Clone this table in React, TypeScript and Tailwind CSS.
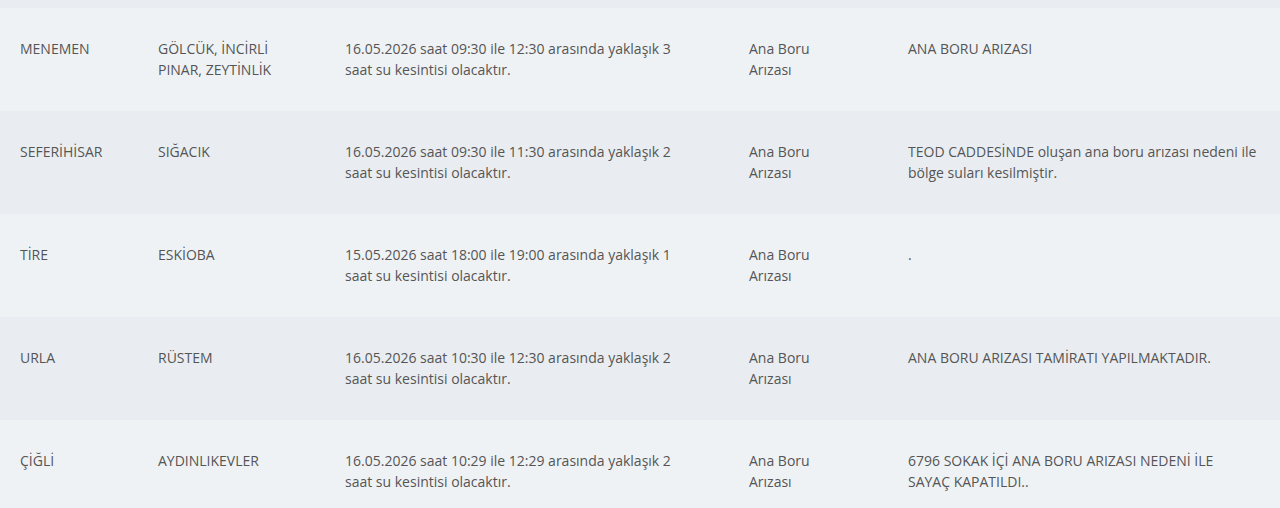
const rows = [
  {
    ilce: "MENEMEN",
    mahalle: "GÖLCÜK, İNCİRLİ PINAR, ZEYTİNLİK",
    aciklama: "16.05.2026 saat 09:30 ile 12:30 arasında yaklaşık 3 saat su kesintisi olacaktır.",
    tip: "Ana Boru Arızası",
    detay: "ANA BORU ARIZASI",
  },
  {
    ilce: "SEFERİHİSAR",
    mahalle: "SIĞACIK",
    aciklama: "16.05.2026 saat 09:30 ile 11:30 arasında yaklaşık 2 saat su kesintisi olacaktır.",
    tip: "Ana Boru Arızası",
    detay: "TEOD CADDESİNDE oluşan ana boru arızası nedeni ile bölge suları kesilmiştir.",
  },
  {
    ilce: "TİRE",
    mahalle: "ESKİOBA",
    aciklama: "15.05.2026 saat 18:00 ile 19:00 arasında yaklaşık 1 saat su kesintisi olacaktır.",
    tip: "Ana Boru Arızası",
    detay: ".",
  },
  {
    ilce: "URLA",
    mahalle: "RÜSTEM",
    aciklama: "16.05.2026 saat 10:30 ile 12:30 arasında yaklaşık 2 saat su kesintisi olacaktır.",
    tip: "Ana Boru Arızası",
    detay: "ANA BORU ARIZASI TAMİRATI YAPILMAKTADIR.",
  },
  {
    ilce: "ÇİĞLİ",
    mahalle: "AYDINLIKEVLER",
    aciklama: "16.05.2026 saat 10:29 ile 12:29 arasında yaklaşık 2 saat su kesintisi olacaktır.",
    tip: "Ana Boru Arızası",
    detay: "6796 SOKAK İÇİ ANA BORU ARIZASI NEDENİ İLE SAYAÇ KAPATILDI..",
  },
];

export default function App() {
  return (
    <div
      className="w-[1280px] h-[508px] overflow-hidden bg-[#e9edf2] text-[14px] leading-[21px] text-[#555]"
      style={{ fontFamily: "'Open Sans', 'Noto Sans', sans-serif" }}
    >
      <div className="h-[8px] bg-[#e9edf2]" />
      {rows.map((r, i) => (
        <div
          key={r.ilce}
          className={`grid grid-cols-[138px_187px_404px_159px_1fr] h-[103px] pt-[30px] ${
            i % 2 === 0 ? "bg-[#eff2f5]" : "bg-[#e9edf1]"
          }`}
        >
          <div className="pl-5 pr-4">{r.ilce}</div>
          <div className="pl-5 pr-4">{r.mahalle}</div>
          <div className="pl-5 pr-[39px]">{r.aciklama}</div>
          <div className="pl-5 pr-10">{r.tip}</div>
          <div className="pl-5 pr-[23px]">{r.detay}</div>
        </div>
      ))}
    </div>
  );
}
